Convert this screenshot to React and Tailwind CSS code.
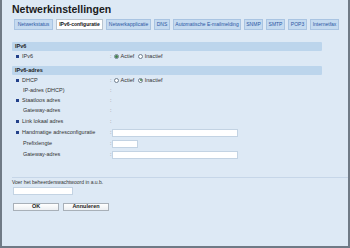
import React from "react";

const tabs = [
  { label: "Netwerkstatus", w: "w-[39px]" },
  { label: "IPv6-configuratie", w: "w-[47px]", active: true },
  { label: "Netwerkapplicatie", w: "w-[45px]" },
  { label: "DNS", w: "w-[16px]" },
  { label: "Automatische E-mailmelding", w: "w-[68px]" },
  { label: "SNMP", w: "w-[19px]" },
  { label: "SMTP", w: "w-[19px]" },
  { label: "POP3", w: "w-[19px]" },
  { label: "Internetfax", w: "w-[29px]" },
];

function Radio({ checked }) {
  return (
    <span className="w-[5px] h-[5px] rounded-full border-[0.75px] border-[#6f7f8f] bg-white flex items-center justify-center">
      {checked && <span className="w-[2.5px] h-[2.5px] rounded-full bg-[#3f7f4a]" />}
    </span>
  );
}

function Header({ children }) {
  return (
    <div className="h-[9px] w-[310px] bg-[#bcd5ec] rounded-[1px] flex items-center pl-[3px] text-[5.5px] font-bold text-[#1c1c1c]">
      {children}
    </div>
  );
}

function Row({ label, bullet, h = "h-[10px]", children }) {
  return (
    <div className={`${h} flex items-center text-[5.5px] text-[#333]`}>
      <div className="w-[98px] flex items-center">
        {bullet ? (
          <>
            <span className="ml-[4px] w-[3px] h-[3px] bg-[#23418a]" />
            <span className="ml-[3px]">{label}</span>
          </>
        ) : (
          <span className="ml-[11px]">{label}</span>
        )}
      </div>
      <span className="w-[2px] text-[#777]">:</span>
      {children}
    </div>
  );
}

function RadioPair({ actief }) {
  return (
    <div className="flex items-center ml-[2px] gap-[1.5px]">
      <Radio checked={actief} />
      <span>Actief</span>
      <span className="w-[1px]" />
      <Radio checked={!actief} />
      <span>Inactief</span>
    </div>
  );
}

function Field({ w }) {
  return <div className={`${w} h-[8px] bg-white border border-[#c3d3e3]`} />;
}

export default function App() {
  return (
    <div
      className="w-[350px] h-[248px] bg-[#dde9f5] border-x-2 border-b-2 border-[#6f7a86] overflow-hidden"
      style={{ fontFamily: '"Liberation Sans", Arial, sans-serif' }}
    >
      <div className="pl-[10px]">
        <div className="h-[19px] pt-[4px] text-[10.5px] leading-[10px] font-bold text-[#1b1b1b]">
          Netwerkinstellingen
        </div>

        <div className="h-[11px] flex gap-[3px] pl-[2px]">
          {tabs.map((t) => (
            <div
              key={t.label}
              className={`${t.w} h-full shrink-0 flex items-center justify-center whitespace-nowrap text-[5px] border ${
                t.active
                  ? "bg-white border-[#b9c4cf] text-[#111] font-bold"
                  : "bg-[#c4daf0] border-[#a9c4e2] text-[#2b56a3]"
              }`}
            >
              {t.label}
            </div>
          ))}
        </div>

        <div className="mt-[12px]">
          <Header>IPv6</Header>
          <Row label="IPv6" bullet h="h-[11px]">
            <RadioPair actief />
          </Row>
        </div>

        <div className="mt-[4px]">
          <Header>IPv6-adres</Header>
          <Row label="DHCP" bullet>
            <RadioPair actief={false} />
          </Row>
          <Row label="IP-adres (DHCP)" />
          <Row label="Staatloos adres" bullet />
          <Row label="Gateway-adres" h="h-[11px]" />
          <Row label="Link lokaal adres" bullet h="h-[11px]" />
          <Row label="Handmatige adresconfiguratie" bullet h="h-[11px]">
            <Field w="w-[126px]" />
          </Row>
          <Row label="Prefixlengte" h="h-[11px]">
            <Field w="w-[26px]" />
          </Row>
          <Row label="Gateway-adres" h="h-[11px]">
            <Field w="w-[126px]" />
          </Row>
        </div>
      </div>

      <div className="mt-[17px] ml-[10px] border-t border-[#c6d6e8]" />

      <div className="pl-[10px]">
        <div className="mt-[1px] h-[8px] flex items-center text-[5px] text-[#333]">
          Voer het beheerderswachtwoord in a.u.b.
        </div>
        <div className="ml-[1px]">
          <Field w="w-[60px]" />
        </div>
        <div className="mt-[8px] flex gap-[4px] ml-[1px]">
          <button className="w-[46px] h-[8px] bg-gradient-to-b from-white to-[#eceff2] border border-[#a8b0b8] text-[5.5px] font-bold text-[#222] flex items-center justify-center leading-none">
            OK
          </button>
          <button className="w-[46px] h-[8px] bg-gradient-to-b from-white to-[#eceff2] border border-[#a8b0b8] text-[5.5px] font-bold text-[#222] flex items-center justify-center leading-none">
            Annuleren
          </button>
        </div>
      </div>
    </div>
  );
}
